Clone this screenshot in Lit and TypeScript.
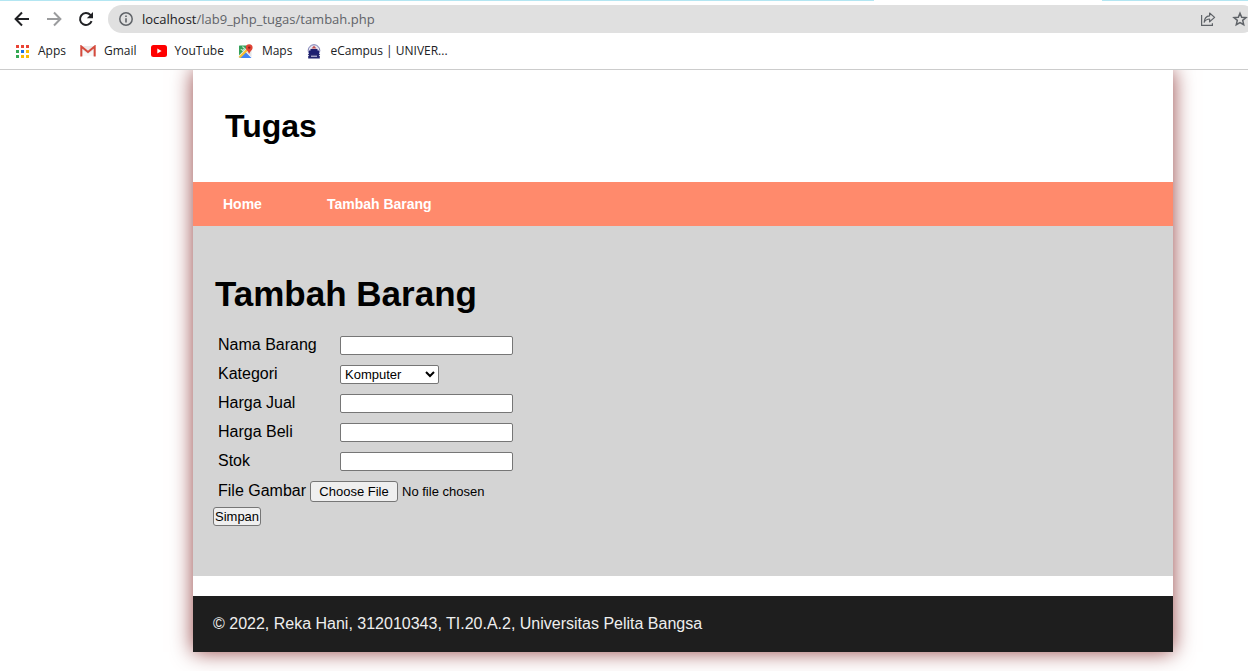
import { LitElement, html, svg, css } from "lit";
import { customElement, state } from "lit/decorators.js";

const dots = ["#ea4335", "#ea4335", "#ea4335", "#34a853", "#1a73e8", "#fbbc04", "#34a853", "#fbbc04", "#fbbc04"];

const icons = {
  back: svg`<svg viewBox="0 0 16 16" width="16" height="16" fill="none" stroke="#202124" stroke-width="2"><path d="M15 8H2M8 1.5 1.6 8 8 14.5"/></svg>`,
  forward: svg`<svg viewBox="0 0 16 16" width="16" height="16" fill="none" stroke="#9b9c9e" stroke-width="2"><path d="M1 8h13M8 1.5 14.4 8 8 14.5"/></svg>`,
  reload: svg`<svg viewBox="0 0 16 16" width="16" height="16"><path d="M13.6 10.2A6 6 0 1 1 12.4 3.9L14 5.4" fill="none" stroke="#202124" stroke-width="2"/><path d="M15 1v6.2H8.8z" fill="#202124"/></svg>`,
  info: svg`<svg viewBox="0 0 14 14" width="14" height="14"><circle cx="7" cy="7" r="6.2" fill="none" stroke="#5f6368" stroke-width="1.5"/><path d="M6.2 6.2h1.6v4.2H6.2zM6.2 3.5h1.6v1.6H6.2z" fill="#5f6368"/></svg>`,
  share: svg`<svg viewBox="0 0 16 16" width="16" height="16" fill="none" stroke="#5f6368" stroke-width="1.2"><path d="M1.6 4v10.4h10.8v-2.2"/><path d="M4.2 11.2c.2-4 2-6 5.4-6.3V2l5 4.4-5 4.4V8C7 8 5.400 9 4.200 11.200z" stroke-linejoin="round"/></svg>`,
  star: svg`<svg viewBox="0 0 16 16" width="16" height="16"><path d="m8 2.200 1.700 4 4.300.4-3.300 2.800 1 4.300L8 11.500l-3.700 2.200 1-4.300L2 6.600l4.300-.4z" fill="none" stroke="#5f6368" stroke-width="1.500"/></svg>`,
  apps: svg`<svg viewBox="-1 -1 15 15" width="15" height="15">${dots.map((c, i) => svg`<rect x=${(i % 3) * 5} y=${Math.floor(i / 3) * 5} width="3" height="3" fill=${c}></rect>`)}</svg>`,
  gmail: svg`<svg viewBox="0 0 16 12" width="16" height="12"><path d="M1.500 1h13v10h-13z" fill="#eceaea"/><path d="M3 5.500 8 9l5-3.500V11H3z" fill="#f8f8f8"/><path d="M1.300 11.500V1.500L8 7l6.700-5.500v10" fill="none" stroke="#d54b3d" stroke-width="2"/></svg>`,
  youtube: svg`<svg viewBox="0 0 16 12" width="16" height="12"><rect width="16" height="12" rx="2.500" fill="#f00"/><path d="m6.300 3.400 4.300 2.600-4.300 2.600z" fill="#fff"/></svg>`,
  maps: svg`<svg viewBox="0 0 15 15" width="15" height="15"><path d="M1.500 1.500h9L1 11.500V2z" fill="#34a15a"/><path d="M.5 12 10 2.500l3.500 3V13L8 8z" fill="#e3e4e6"/><path d="M1 14 7.500 8l6 6z" fill="#4285f4"/><path d="M.5 13 8.500 5l1.500 1.500L2.500 14z" fill="#fbc02d"/><path d="M3 5.200a1.700 1.700 0 1 0 1.300-2.300" fill="none" stroke="#fff"/><path d="M11.200.2a3.400 3.400 0 0 1 3.400 3.500c0 2.300-2.400 3-3.400 6.300-1-3.300-3.400-4-3.400-6.300A3.400 3.400 0 0 1 11.200.2z" fill="#e04335"/><circle cx="11.200" cy="3.600" r="1.200" fill="#8c1d18"/></svg>`,
  campus: svg`<svg viewBox="0 0 14 15" width="14" height="15"><circle cx="7" cy="6.500" r="5.800" fill="#e4e4f0" stroke="#7c7eb4"/><path d="M7 1.800 9.500 4.500h-5z" fill="#c4504f"/><path d="M3.500 5h7v1.500H12V10H2V6.500h1.500z" fill="#1d1f70"/><path d="M.8 10h12.400l-1.400 2h1v2.500H1.200V12h1z" fill="#23256f"/><path d="M4 12.200h6" stroke="#dcdcee"/></svg>`,
};

const bookmarks = [
  { icon: icons.apps, label: "Apps", href: "#apps" },
  { icon: icons.gmail, label: "Gmail", href: "#gmail" },
  { icon: icons.youtube, label: "YouTube", href: "#youtube" },
  { icon: icons.maps, label: "Maps", href: "#maps" },
  { icon: icons.campus, label: "eCampus | UNIVER...", href: "#ecampus" },
];

@customElement("browser-bar")
class BrowserBar extends LitElement {
  static styles = css`
    :host { display: block; background: #fff; border-bottom: 1px solid #ccc; overflow: hidden; font: 12px/16px "Open Sans", "Noto Sans", sans-serif; color: #202124; }
    * { box-sizing: border-box; }
    .tabs { display: flex; justify-content: space-between; height: 1px; }
    .edge { background: #b3e6f2; }
    .edge-left { width: 70%; }
    .edge-right { width: 146px; }
    .toolbar { display: flex; align-items: center; height: 36px; padding-left: 14px; }
    .tools { display: flex; gap: 16px; margin-right: 14px; }
    .tool { display: flex; flex: none; padding: 0; margin: 0; border: 0; background: none; }
    .omnibox { display: flex; align-items: center; flex: 1; height: 28px; margin-right: -8px; padding: 0 8px 0 11px; border-radius: 14px; background: #e0e0e0; }
    .omnibox .tool { margin: 0 0 0 16px; }
    .omnibox .info { margin: 0 9px 0 0; }
    .url { flex: 1; font-size: 13px; line-height: 18px; color: #5f6368; }
    .host { color: #202124; }
    .bookmarks { display: flex; align-items: center; gap: 14px; height: 32px; padding: 0 14px 4px; }
    .bookmark { display: flex; align-items: center; gap: 8px; color: inherit; text-decoration: none; white-space: nowrap; }
    .glyph { display: flex; justify-content: center; width: 16px; }
    svg { display: block; flex: none; }
  `;
  render() {
    return html`
      <div class="tabs"><span class="edge edge-left"></span><span class="edge edge-right"></span></div>
      <div class="toolbar">
        <div class="tools">
          <button class="tool" aria-label="Back">${icons.back}</button>
          <button class="tool" aria-label="Forward">${icons.forward}</button>
          <button class="tool" aria-label="Reload">${icons.reload}</button>
        </div>
        <div class="omnibox">
          <button class="tool info" aria-label="Site information">${icons.info}</button>
          <span class="url"><span class="host">localhost</span>/lab9_php_tugas/tambah.php</span>
          <button class="tool" aria-label="Share">${icons.share}</button>
          <button class="tool" aria-label="Bookmark">${icons.star}</button>
        </div>
      </div>
      <nav class="bookmarks">
        ${bookmarks.map((b) => html`<a class="bookmark" href=${b.href}><span class="glyph">${b.icon}</span><span>${b.label}</span></a>`)}
      </nav>
    `;
  }
}

@customElement("item-form")
class ItemForm extends LitElement {
  @state() private category = "Komputer";

  static styles = css`
    :host { display: block; }
    * { box-sizing: border-box; }
    .row { display: flex; align-items: center; height: 29px; padding-left: 5px; }
    .label { width: 122px; padding-bottom: 2px; line-height: 18px; }
    .field, .select { height: 19px; margin: 0; border: 1px solid #767676; border-radius: 2px; background: #fff; color: #000; font: 13px/15px "Liberation Sans", Arial, sans-serif; }
    .field { width: 173px; padding: 1px 2px; }
    .select { width: 99px; padding: 0; }
    .file-row { height: 31px; gap: 4px; }
    .file-row .label { width: auto; }
    .file { font: 13px/15px "Liberation Sans", Arial, sans-serif; }
    .file::file-selector-button { height: 21px; width: 88px; margin: 0 4px 0 0; padding: 1px 6px; border: 1px solid #767676; border-radius: 3px; background: #efefef; color: #000; font: inherit; }
    .submit { display: block; height: 19px; padding: 1px; border: 1px solid #767676; border-radius: 3px; background: #efefef; color: #000; font: 13px/15px "Liberation Sans", Arial, sans-serif; }
  `;

  private text(id: string, label: string) {
    return html`<div class="row"><label class="label" for=${id}>${label}</label><input class="field" id=${id} name=${id} type="text"></div>`;
  }

  render() {
    return html`
      <form @submit=${(e: Event) => e.preventDefault()}>
        ${this.text("nama", "Nama Barang")}
        <div class="row">
          <label class="label" for="kategori">Kategori</label>
          <select class="select" id="kategori" @change=${(e: Event) => (this.category = (e.target as HTMLSelectElement).value)}>
            ${["Komputer", "Elektronik", "Hand Phone"].map((c) => html`<option ?selected=${c === this.category}>${c}</option>`)}
          </select>
        </div>
        ${this.text("harga_jual", "Harga Jual")}
        ${this.text("harga_beli", "Harga Beli")}
        ${this.text("stok", "Stok")}
        <div class="row file-row">
          <label class="label" for="gambar">File Gambar</label><input class="file" id="gambar" type="file">
        </div>
        <button class="submit" type="submit">Simpan</button>
      </form>
    `;
  }
}

@customElement("app-root")
class AppRoot extends LitElement {
  static styles = css`
    :host { display: flex; flex-direction: column; min-height: 100vh; overflow: hidden; background: #fff; color: #000; font: 16px/18px "Liberation Sans", Arial, sans-serif; }
    * { box-sizing: border-box; }
    .viewport { flex: 1; padding: 0 75px 19px 193px; overflow: hidden; }
    .container { background: #fff; box-shadow: 0 0 20px #964545; }
    .header { padding: 38px 32px; }
    .title { margin: 0; font-size: 32px; line-height: 36px; }
    .nav { display: flex; background: #ff8a6c; }
    .link { padding: 14px 35px 14px 30px; color: #fff; font-size: 14px; font-weight: bold; line-height: 16px; text-decoration: none; }
    .content { padding: 48px 20px 50px; background: #d4d4d4; }
    .heading { margin: 0 0 17px; padding-left: 2px; font-size: 35px; line-height: 40px; }
    .footer { margin-top: 20px; padding: 19px 20px; background: #1e1e1e; color: #eee; }
    .copy { margin: 0; }
  `;
  render() {
    return html`
      <browser-bar></browser-bar>
      <div class="viewport">
        <div class="container">
          <header class="header"><h1 class="title">Tugas</h1></header>
          <nav class="nav"><a class="link" href="#home">Home</a><a class="link" href="#tambah">Tambah Barang</a></nav>
          <main class="content">
            <h2 class="heading">Tambah Barang</h2>
            <item-form></item-form>
          </main>
          <footer class="footer"><p class="copy">© 2022, Reka Hani, 312010343, TI.20.A.2, Universitas Pelita Bangsa</p></footer>
        </div>
      </div>
    `;
  }
}
